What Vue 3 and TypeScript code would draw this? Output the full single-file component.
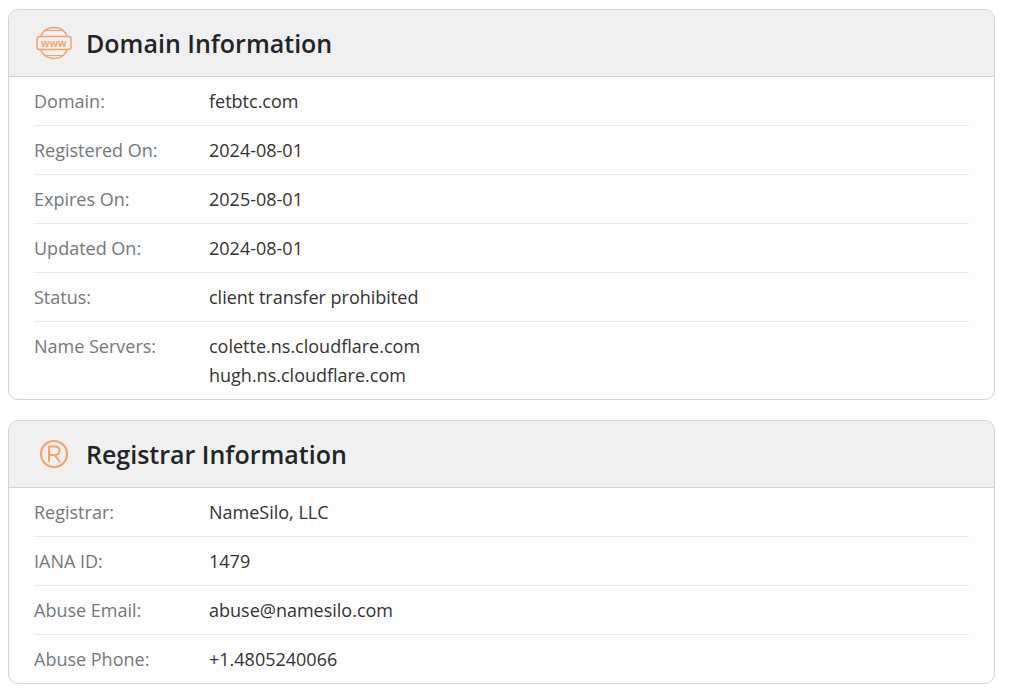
<script setup lang="ts">
interface Row { label: string; values: string[] }
const domainRows: Row[] = [
  { label: 'Domain:', values: ['fetbtc.com'] },
  { label: 'Registered On:', values: ['2024-08-01'] },
  { label: 'Expires On:', values: ['2025-08-01'] },
  { label: 'Updated On:', values: ['2024-08-01'] },
  { label: 'Status:', values: ['client transfer prohibited'] },
  { label: 'Name Servers:', values: ['colette.ns.cloudflare.com', 'hugh.ns.cloudflare.com'] },
]
const registrarRows: Row[] = [
  { label: 'Registrar:', values: ['NameSilo, LLC'] },
  { label: 'IANA ID:', values: ['1479'] },
  { label: 'Abuse Email:', values: ['abuse@namesilo.com'] },
  { label: 'Abuse Phone:', values: ['+1.4805240066'] },
]
</script>

<template>
  <main class="page">
    <section class="card">
      <header class="head">
        <svg class="icon" viewBox="0 0 36 34" width="36" height="34" aria-hidden="true">
          <g fill="none" stroke="#f4a26c" stroke-width="1.5">
            <path d="M4.5 10.5C7 4.6 12 1.5 18 1.5s11 3.1 13.5 9" />
            <path d="M4.5 23.5c2.5 5.9 7.500 9 13.500 9s11-3.100 13.500-9" />
            <rect x="1" y="10.500" width="34" height="13" rx="2.500" />
            <path d="M8 4.500h20M8 29.500h20" stroke-width="1" />
          </g>
          <text x="18" y="21" text-anchor="middle" class="www">www</text>
        </svg>
        <h2>Domain Information</h2>
      </header>
      <div class="rows">
        <div v-for="r in domainRows" :key="r.label" class="row">
          <div class="label">{{ r.label }}</div>
          <div class="value">
            <div v-for="v in r.values" :key="v">{{ v }}</div>
          </div>
        </div>
      </div>
    </section>

    <section class="card">
      <header class="head">
        <svg class="icon" viewBox="0 0 36 34" width="36" height="34" aria-hidden="true">
          <circle cx="18" cy="17" r="13" fill="none" stroke="#f4a26c" stroke-width="2.200" />
          <path d="M13 25V9.500h5.500c3.200 0 5 1.600 5 4.200 0 2.700-1.800 4.300-5 4.300H13M18.500 18l5.500 7" fill="none" stroke="#f4a26c" stroke-width="2" />
        </svg>
        <h2>Registrar Information</h2>
      </header>
      <div class="rows">
        <div v-for="r in registrarRows" :key="r.label" class="row">
          <div class="label">{{ r.label }}</div>
          <div class="value">
            <div v-for="v in r.values" :key="v">{{ v }}</div>
          </div>
        </div>
      </div>
    </section>
  </main>
</template>

<style scoped>
.page {
  display: flex;
  flex-direction: column;
  gap: 20px;
  width: 987px;
  margin-left: 8px;
  padding-top: 9px;
  font-family: "Open Sans", sans-serif;
}
.card {
  border: 1px solid #d3d3d3;
  border-radius: 10px;
  background: #fdfdfd;
  overflow: hidden;
}
.head {
  display: flex;
  align-items: center;
  gap: 14px;
  height: 66px;
  padding-left: 27px;
  background: #f0f0f0;
  border-bottom: 1px solid #d3d3d3;
}
.icon {
  flex: none;
}
.www {
  font-family: "Liberation Sans", sans-serif;
  font-size: 10.500px;
  font-weight: 700;
  letter-spacing: 0.300px;
  fill: #f4a26c;
}
h2 {
  margin: 0;
  font-size: 25px;
  line-height: 34px;
  font-weight: 600;
  color: #212529;
}
.rows {
  padding: 0 25px;
}
.row {
  display: flex;
  padding: 10px 0 9px;
  border-bottom: 1px solid #e9e9e9;
  font-size: 18px;
  line-height: 29px;
}
.row:last-child {
  border-bottom: 0;
}
.label {
  flex: none;
  width: 175px;
  color: #75787b;
}
.value {
  color: #333;
}
</style>
